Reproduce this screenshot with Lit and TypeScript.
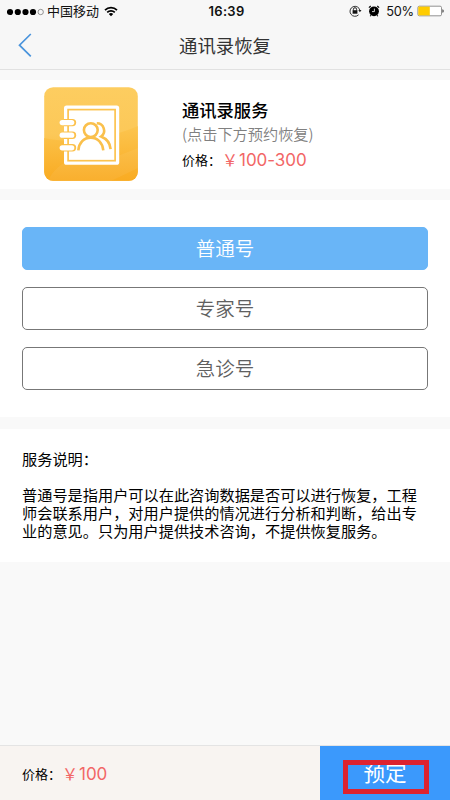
import { LitElement, html, css } from "lit";
import { customElement, state } from "lit/decorators.js";
import { classMap } from "lit/directives/class-map.js";

@customElement("status-bar")
class StatusBar extends LitElement {
  static styles = css`
    :host {
      display: grid;
      grid-template-columns: 1fr auto 1fr;
      align-items: center;
      height: 22px;
      padding: 0 6px 0 7px;
      color: #111;
    }
    .side { display: flex; align-items: center; }
    .right { justify-content: flex-end; }
    .dots { width: 37px; height: 8px; }
    .carrier { font-size: 13px; line-height: 20px; margin: -1px 0 0 3px; }
    .wifi { width: 14px; height: 11px; margin: -1px 0 0 5px; }
    .time { font: 600 13px/22px Inter, sans-serif; letter-spacing: 0.3px; padding-left: 2px; margin-top: -1px; }
    .lock { width: 13px; height: 12px; margin-top: -1px; }
    .alarm { width: 12px; height: 12px; margin: -1px 0 0 6px; }
    .pct { font: 400 12.8px/22px Inter, sans-serif; margin: 1px 0 0 6px; letter-spacing: -0.2px; }
    .battery { width: 28px; height: 12px; margin: -1px -1px 0 3px; }
  `;
  render() {
    return html`
      <div class="side">
        <svg class="dots" viewBox="0 0 37 8">
          ${[3, 10.8, 18.5, 26].map((x) => html`<svg><circle cx=${x} cy="4" r="3.1" fill="#000" /></svg>`)}
          <circle cx="33.7" cy="4" r="2.7" fill="none" stroke="#555" stroke-width=".6" />
        </svg>
        <span class="carrier">中国移动</span>
        <svg class="wifi" viewBox="0 0 14 11" fill="none" stroke="#000" stroke-width="1.7">
          <path d="M1 4.1a8.6 8.6 0 0 1 12 0M3.2 6.4a5.4 5.4 0 0 1 7.6 0" />
          <path d="M7 10.3 4.8 8.1a3.1 3.1 0 0 1 4.4 0z" fill="#000" stroke="none" />
        </svg>
      </div>
      <span class="time">16:39</span>
      <div class="side right">
        <svg class="lock" viewBox="0 0 13 12" fill="none" stroke="#222">
          <path d="M9.6 9.8a5 5 0 1 1 1.3-4.5" stroke-width=".9" />
          <path d="M9.3 5h3.2l-1.6 2.2z" fill="#222" stroke="none" />
          <path d="M4.4 5.5V4.3a1.6 1.6 0 0 1 3.2 0v1.2" stroke-width="1" />
          <path d="M3.6 5.2h4.8v3.5H3.6z" fill="#111" stroke="none" />
        </svg>
        <svg class="alarm" viewBox="0 0 12 12">
          <circle cx="6" cy="6.3" r="4.9" fill="#000" />
          <path d="M.9 2.6 2.7 1M11.1 2.6 9.3 1M2.9 10.2l-.7 1M9.1 10.2l.7 1" fill="none" stroke="#000" stroke-width="1.1" />
          <path d="M6.4 3.6v3H4" fill="none" stroke="#fff" stroke-width=".8" />
        </svg>
        <span class="pct">50%</span>
        <svg class="battery" viewBox="0 0 28 12">
          <rect x=".9" y="1.2" width="23.6" height="9.6" rx="1.4" fill="#fff" stroke="#777" stroke-width=".8" />
          <path d="M1.3 1.6h11.5v8.8H1.3z" fill="#fc0" />
          <path d="M25.3 4.2c2 .5 2 3.1 0 3.6z" fill="#555" />
        </svg>
      </div>
    `;
  }
}

@customElement("contacts-icon")
class ContactsIcon extends LitElement {
  static styles = css`
    :host { display: block; width: 94px; height: 94px; }
    svg { display: block; width: 94px; height: 94px; }
  `;
  render() {
    return html`
      <svg viewBox="0 0 94 94" fill="none">
        <defs>
          <linearGradient id="base" x2="0" y2="1">
            <stop stop-color="#fdcd60" />
            <stop offset=".5" stop-color="#fcc858" />
            <stop offset="1" stop-color="#f9ae27" />
          </linearGradient>
          <linearGradient id="glow" x2="0" y2="1">
            <stop stop-color="#fcc54f" />
            <stop offset="1" stop-color="#f9ab22" />
          </linearGradient>
          <clipPath id="tile"><rect x=".2" y=".2" width="93.6" height="93.6" rx="9" /></clipPath>
        </defs>
        <g clip-path="url(#tile)">
          <path d="M0 0h94v94H0z" fill="url(#base)" />
          <path d="M0 51C32 58 68 50 94 39v55H0z" fill="url(#glow)" />
          <path d="M4 94c5-11 13-18 27-23l30 3 33-13v20L67 94z" fill="#fff" opacity=".06" />
        </g>
        <rect x="20" y="18.5" width="55.2" height="59.3" rx="2.6" fill="#fff" />
        <rect x="24.1" y="22.6" width="47" height="51.1" stroke="#fcc34f" stroke-width="1.7" />
        ${[35.6, 48.2, 60.8].map(
          (y) => html`<svg viewBox="0 0 94 94">
            <path d=${`M20 ${y - 3.7}h8.5a3.7 3.7 0 0 1 0 7.4H20z`} fill="#fcc14b" />
            <rect x="15.6" y=${y - 2.6} width="14.7" height="5.2" rx="2.6" fill="#fff" />
          </svg>`
        )}
        <g stroke="#fac04c" stroke-width="2.6" transform="translate(.3 .8)">
          <path d="M52.5 35.5a7.3 7.3 0 0 1 4.3 13.2c5.8 2.4 9.1 7 9.5 12.6" />
          <circle cx="46.5" cy="42.3" r="6.9" />
          <path d="M34 62.5c.7-7.6 5.5-12.7 12.4-12.7S58.2 54.9 59 62.5" />
        </g>
      </svg>
    `;
  }
}

@customElement("app-root")
class AppRoot extends LitElement {
  @state() private selected = 0;
  private kinds = ["普通号", "专家号", "急诊号"];

  static styles = css`
    :host {
      display: flex;
      flex-direction: column;
      height: 800px;
      overflow: hidden;
      background: #f9f9f9;
      color: #000;
      font-family: "Noto Sans CJK SC", sans-serif;
    }
    * { box-sizing: border-box; }
    header { height: 70px; flex: none; background: #f7f7f7; border-bottom: 1px solid #e1e1e1; }
    .nav { display: grid; grid-template-columns: 50px 1fr 50px; align-items: center; height: 46px; }
    .back { width: 14px; height: 24px; margin-left: 18px; }
    h1 { margin: 0; font-size: 18.4px; line-height: 44px; font-weight: 400; text-align: center; color: #333; }
    main { flex: 1; display: flex; flex-direction: column; gap: 11px; padding-top: 10px; }
    section { background: #fff; }
    .service { display: flex; height: 109px; padding: 7px 0 0 44px; }
    .info { margin: 12px 0 0 44px; }
    h2 { margin: 0; font-size: 17.3px; line-height: 22px; font-weight: 500; }
    .hint { font-size: 15.2px; line-height: 24px; font-weight: 350; color: #808080; white-space: nowrap; }
    .price { display: flex; align-items: center; height: 28px; font-size: 13px; }
    .amount { display: flex; align-items: center; color: #f26666; font: 400 17px/26px Inter, "Noto Sans CJK SC", sans-serif; letter-spacing: -0.05px; margin: 1px 0 0 2px; }
    .yen { font: 400 16px/24px "Noto Sans CJK SC", sans-serif; width: 17px; margin: -2px 0 0 -1px; letter-spacing: 0; }
    .kinds { display: flex; flex-direction: column; gap: 17px; height: 217px; padding: 27px 22px 0; }
    button { border: 0; margin: 0; padding: 0; font: inherit; }
    .kind { height: 43px; flex: none; border: 1px solid #777; border-radius: 5px; background: #fff; color: #606060; font-size: 19.5px; font-weight: 350; line-height: 39px; padding-bottom: 2px; }
    .kind.on { background: #69b5f7; border-color: #69b5f7; color: #fff; }
    .note { height: 133px; margin-top: 1px; padding: 20px 0 0 22px; font-size: 15.2px; line-height: 18px; }
    .note p { margin: 0 0 18px; white-space: nowrap; }
    footer { display: flex; height: 55px; flex: none; background: #f8f4f1; border-top: 1px solid #e4e4e4; }
    footer .price { flex: 1; height: 54px; padding-left: 22px; }
    .book { position: relative; width: 130px; background: #3b99fc; color: #fff; font-size: 21.6px; line-height: 52px; padding-bottom: 2px; }
    .frame { position: absolute; left: 23px; top: 14px; width: 86px; height: 34px; border: 5px solid #dd2330; }
  `;

  private amount(text: string) {
    return html`<div class="price"><span>价格：</span><span class="amount"><span class="yen">￥</span>${text}</span></div>`;
  }

  render() {
    return html`
      <header>
        <status-bar></status-bar>
        <div class="nav">
          <svg class="back" viewBox="0 0 14 24" fill="none" stroke="#4a94dc" stroke-width="1.7">
            <path d="M12.8 1 1.5 12.2 12.8 23.4" />
          </svg>
          <h1>通讯录恢复</h1>
        </div>
      </header>
      <main>
        <section class="service">
          <contacts-icon></contacts-icon>
          <div class="info">
            <h2>通讯录服务</h2>
            <div class="hint">(点击下方预约恢复)</div>
            ${this.amount("100-300")}
          </div>
        </section>
        <section class="kinds">
          ${this.kinds.map(
            (k, i) => html`<button class=${classMap({ kind: true, on: i === this.selected })} @click=${() => (this.selected = i)}>${k}</button>`
          )}
        </section>
        <section class="note">
          <p>服务说明：</p>
          <p>普通号是指用户可以在此咨询数据是否可以进行恢复，工程<br />师会联系用户，对用户提供的情况进行分析和判断，给出专<br />业的意见。只为用户提供技术咨询，不提供恢复服务。</p>
        </section>
      </main>
      <footer>
        ${this.amount("100")}
        <button class="book">预定<span class="frame"></span></button>
      </footer>
    `;
  }
}
